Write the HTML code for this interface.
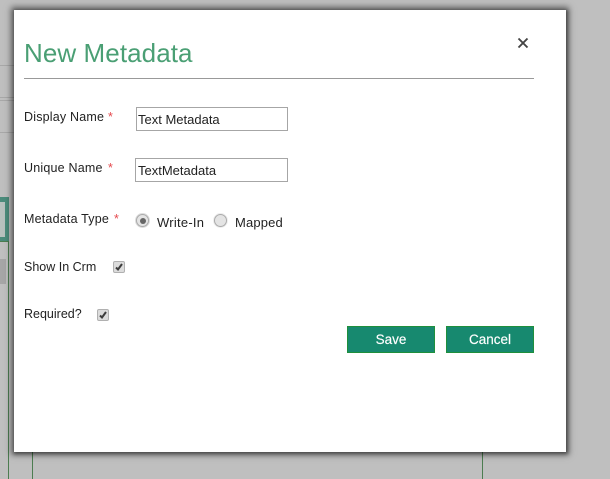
<!DOCTYPE html>
<html>
<head>
<meta charset="utf-8">
<style>
html,body{margin:0;padding:0;width:610px;height:479px;overflow:hidden;background:#bfbfbf;font-family:"Liberation Sans",sans-serif;}
.a{position:absolute;white-space:nowrap;}
#modal{position:absolute;left:14px;top:10px;width:552px;height:442px;background:#fff;box-shadow:0 0 6px 3px rgba(0,0,0,.5),1px 1px 3px 1px rgba(0,0,0,.3);}
.lb{font-size:12.5px;color:#222;line-height:16px;}
.st{position:absolute;top:0;color:#e5484d;}
.in{box-sizing:border-box;height:24px;border:1px solid #a6a6a6;background:#fff;font-size:13px;color:#222;line-height:23px;padding-left:1px;}
.btn{box-sizing:border-box;width:88px;height:27px;top:326px;background:#17896f;border:1px solid #1f8f3c;color:#fff;font-size:13.5px;-webkit-text-stroke:.15px #fff;text-align:center;line-height:25px;}
.cb{box-sizing:border-box;width:12px;height:12px;border:1px solid #b0b0b0;border-radius:2px;background:#dcdcdc;}
.rd{box-sizing:border-box;width:13px;height:13px;border:1px solid #ababab;border-radius:50%;background:#e4e4e4;}
</style>
</head>
<body>
<div class="a" style="left:0;top:65px;width:14px;height:1px;background:#a8a8a8"></div>
<div class="a" style="left:0;top:97px;width:14px;height:1px;background:#a8a8a8"></div>
<div class="a" style="left:0;top:100px;width:14px;height:1px;background:#a8a8a8"></div>
<div class="a" style="left:0;top:132px;width:14px;height:1px;background:#a8a8a8"></div>
<div class="a" style="left:0;top:197px;width:9px;height:44px;box-sizing:border-box;border:solid #4b8b7b;border-width:5px 4px 4px 0;background:#b7c1be"></div>
<div class="a" style="left:0;top:241px;width:9px;height:1px;background:#4c7d50"></div>
<div class="a" style="left:0;top:259px;width:6px;height:25px;background:#a6a6a6"></div>
<div class="a" style="left:8px;top:241px;width:1px;height:238px;background:#4c7d50"></div>
<div class="a" style="left:32px;top:450px;width:1px;height:29px;background:#4c7d50"></div>
<div class="a" style="left:482px;top:450px;width:1px;height:29px;background:#4c7d50"></div>

<div id="modal"></div>

<div class="a" style="left:24px;top:37px;font-size:26px;line-height:32px;color:#4a9f74;letter-spacing:.08px">New Metadata</div>
<svg class="a" style="left:517px;top:37px" width="12" height="12" viewBox="0 0 12 12"><path d="M1.5 1.5L10.5 10.5M10.5 1.5L1.5 10.5" stroke="#444" stroke-width="1.9" fill="none"/></svg>
<div class="a" style="left:24px;top:78px;width:510px;height:1px;background:#999"></div>

<div class="a lb" style="left:24px;top:109px;letter-spacing:.2px">Display Name <span class="st" style="left:84px">*</span></div>
<div class="a in" style="left:136px;top:107px;width:152px">Text Metadata</div>

<div class="a lb" style="left:24px;top:160px;letter-spacing:.2px">Unique Name <span class="st" style="left:84px">*</span></div>
<div class="a in" style="left:135px;top:158px;width:153px;padding-left:2px">TextMetadata</div>

<div class="a lb" style="left:24px;top:211px;letter-spacing:.2px">Metadata Type <span class="st" style="left:90px">*</span></div>
<div class="a rd" style="left:136px;top:214px;box-shadow:0 0 0 1px #ddd"></div>
<div class="a" style="left:139.5px;top:217.5px;width:6px;height:6px;border-radius:50%;background:#666"></div>
<div class="a lb" style="left:157px;top:215px;font-size:13px;letter-spacing:.25px">Write-In</div>
<div class="a rd" style="left:214px;top:214px;box-shadow:0 0 0 1px #eee"></div>
<div class="a lb" style="left:235px;top:215px;font-size:13px;letter-spacing:.15px">Mapped</div>

<div class="a lb" style="left:24px;top:259px">Show In Crm</div>
<div class="a cb" style="left:113px;top:261px"></div>
<svg class="a" style="left:113px;top:261px" width="12" height="12" viewBox="0 0 12 12"><path d="M3 6.5L5 8.5L9 3" stroke="#3d3d3d" stroke-width="2" fill="none"/></svg>

<div class="a lb" style="left:24px;top:306px">Required?</div>
<div class="a cb" style="left:97px;top:309px"></div>
<svg class="a" style="left:97px;top:309px" width="12" height="12" viewBox="0 0 12 12"><path d="M3 6.5L5 8.5L9 3" stroke="#3d3d3d" stroke-width="2" fill="none"/></svg>

<div class="a btn" style="left:347px">Save</div>
<div class="a btn" style="left:446px">Cancel</div>
</body>
</html>
